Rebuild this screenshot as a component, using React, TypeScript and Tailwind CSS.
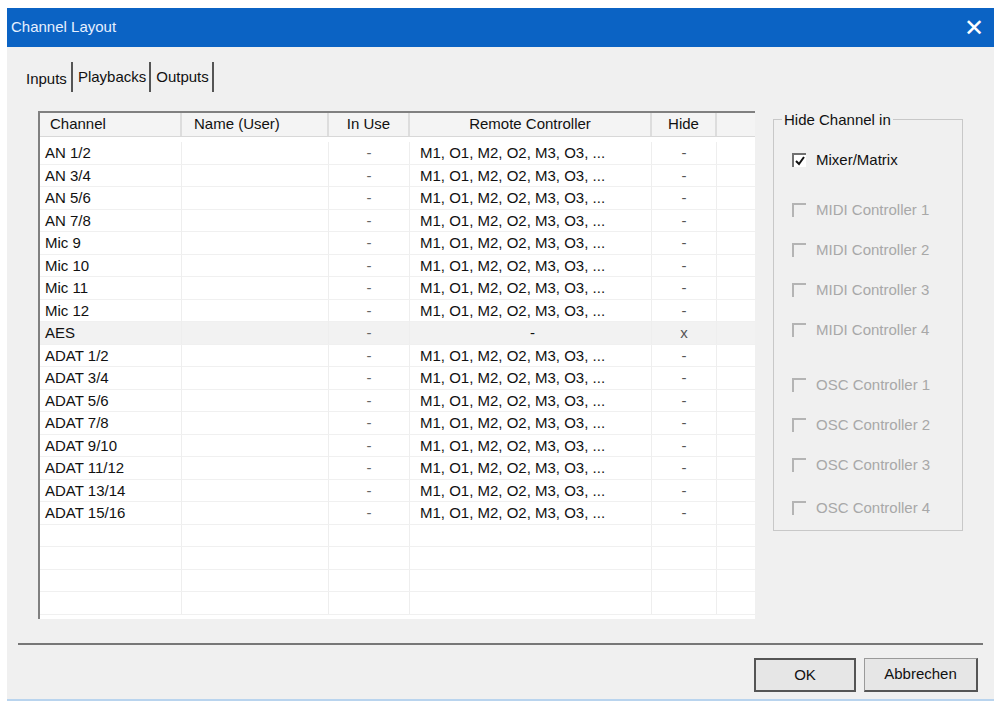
import React from 'react';

const rows: [string, string, string, string?][] = [
  ['AN 1/2', '-', 'M1, O1, M2, O2, M3, O3, ...', '-'],
  ['AN 3/4', '-', 'M1, O1, M2, O2, M3, O3, ...', '-'],
  ['AN 5/6', '-', 'M1, O1, M2, O2, M3, O3, ...', '-'],
  ['AN 7/8', '-', 'M1, O1, M2, O2, M3, O3, ...', '-'],
  ['Mic 9', '-', 'M1, O1, M2, O2, M3, O3, ...', '-'],
  ['Mic 10', '-', 'M1, O1, M2, O2, M3, O3, ...', '-'],
  ['Mic 11', '-', 'M1, O1, M2, O2, M3, O3, ...', '-'],
  ['Mic 12', '-', 'M1, O1, M2, O2, M3, O3, ...', '-'],
  ['AES', '-', '-', 'x'],
  ['ADAT 1/2', '-', 'M1, O1, M2, O2, M3, O3, ...', '-'],
  ['ADAT 3/4', '-', 'M1, O1, M2, O2, M3, O3, ...', '-'],
  ['ADAT 5/6', '-', 'M1, O1, M2, O2, M3, O3, ...', '-'],
  ['ADAT 7/8', '-', 'M1, O1, M2, O2, M3, O3, ...', '-'],
  ['ADAT 9/10', '-', 'M1, O1, M2, O2, M3, O3, ...', '-'],
  ['ADAT 11/12', '-', 'M1, O1, M2, O2, M3, O3, ...', '-'],
  ['ADAT 13/14', '-', 'M1, O1, M2, O2, M3, O3, ...', '-'],
  ['ADAT 15/16', '-', 'M1, O1, M2, O2, M3, O3, ...', '-'],
  ['', '', ''],
  ['', '', ''],
  ['', '', ''],
  ['', '', ''],
];

const cols = 'grid grid-cols-[142px_147px_81px_242px_65px_1fr]';

function Check({ label, checked, disabled, className = '' }: { label: string; checked?: boolean; disabled?: boolean; className?: string }) {
  return (
    <div className={`flex items-center gap-[10px] h-[20px] ${className}`}>
      <div className={`w-[14px] h-[14px] border-t-2 border-l-2 ${disabled ? 'border-[#b4b4b4] bg-[#f0f0f0]' : 'border-[#707070] bg-white'} flex items-center justify-center`}>
        {checked && (
          <svg width="12" height="12" viewBox="0 0 12 12"><path d="M2 6 L5 9 L10 2" stroke="#111" strokeWidth="2" fill="none" /></svg>
        )}
      </div>
      <span className={`text-[15px] ${disabled ? 'text-[#a8a8a8]' : 'text-[#111]'}`}>{label}</span>
    </div>
  );
}

export default function App() {
  return (
    <div className="w-[1004px] h-[704px] bg-white pt-[8px] pl-[7px] pr-[10px] pb-[3px]" style={{ fontFamily: '"Liberation Sans", Arial, sans-serif' }}>
      <div className="h-full flex flex-col bg-[#f0f0f0] border-b-2 border-[#b9d4ee]">
        <div className="h-[39px] bg-[#0b63c4] flex items-center justify-between px-[4px]">
          <span className="text-[#e6f0ff] text-[15px]">Channel Layout</span>
          <span className="text-white text-[24px] leading-none pr-[6px]">✕</span>
        </div>
        <div className="flex-1 flex flex-col px-[11px]">
          <div className="flex items-end h-[48px] pl-[8px] pb-[3px] text-[15px] text-[#111]">
            <span className="pr-[4px] pb-[2px]">Inputs</span>
            <span className="border-l-2 border-[#555] h-[30px] pl-[5px] pr-[3px] flex items-center">Playbacks</span>
            <span className="border-l-2 border-[#555] h-[30px] pl-[5px] pr-[3px] flex items-center border-r-2">Outputs</span>
          </div>
          <div className="h-[550px] border-b-2 border-[#777] flex pt-[16px] pl-[20px]">
            <div className="w-[717px] h-[508px] overflow-hidden border-t-2 border-l-2 border-[#808080] bg-white flex flex-col text-[15px] text-[#111]">
              <div className={`${cols} h-[24px] shrink-0 bg-[#f4f4f4] border-b border-[#d8d8d8]`}>
                <div className="pl-[10px] border-r-2 border-[#ddd] flex items-center">Channel</div>
                <div className="pl-[12px] border-r-2 border-[#ddd] flex items-center">Name (User)</div>
                <div className="border-r-2 border-[#ddd] flex items-center justify-center">In Use</div>
                <div className="border-r-2 border-[#ddd] flex items-center justify-center">Remote Controller</div>
                <div className="border-r-2 border-[#ddd] flex items-center justify-center">Hide</div>
                <div />
              </div>
              <div className="pt-[5px]">
                {rows.map((r, i) => (
                  <div key={i} className={`${cols} h-[22.5px] leading-[22px] border-b border-[#f0f0f0] ${r[0] === 'AES' ? 'bg-[#f2f2f2]' : ''}`}>
                    <div className="pl-[5px] border-r border-[#eee]">{r[0]}</div>
                    <div className="border-r border-[#eee]" />
                    <div className="text-center border-r border-[#eee] text-[#666]">{r[1]}</div>
                    <div className="pl-[10px] border-r border-[#eee]">{r[0] === 'AES' ? <span className="pl-[110px]">-</span> : r[2]}</div>
                    <div className="text-center border-r border-[#eee] text-[#555]">{r[3] ?? ''}</div>
                    <div />
                  </div>
                ))}
              </div>
            </div>
            <div className="ml-[18px] mt-[8px] w-[190px] h-[412px] border border-[#c8c8c8] relative">
              <span className="absolute -top-[11px] left-[8px] bg-[#f0f0f0] px-[2px] text-[15px] text-[#111]">Hide Channel in</span>
              <div className="flex flex-col pl-[18px] pt-[30px]">
                <Check label="Mixer/Matrix" checked />
                <Check label="MIDI Controller 1" disabled className="mt-[30px]" />
                <Check label="MIDI Controller 2" disabled className="mt-[20px]" />
                <Check label="MIDI Controller 3" disabled className="mt-[20px]" />
                <Check label="MIDI Controller 4" disabled className="mt-[20px]" />
                <Check label="OSC Controller 1" disabled className="mt-[35px]" />
                <Check label="OSC Controller 2" disabled className="mt-[20px]" />
                <Check label="OSC Controller 3" disabled className="mt-[20px]" />
                <Check label="OSC Controller 4" disabled className="mt-[23px]" />
              </div>
            </div>
          </div>
          <div className="flex justify-end gap-[8px] pt-[13px] pr-[5px] text-[15px] text-[#111]">
            <div className="w-[102px] h-[34px] bg-[#e6e6e6] border-2 border-[#555] flex items-center justify-center">OK</div>
            <div className="w-[114px] h-[34px] bg-[#e6e6e6] border border-[#9a9a9a] border-b-2 border-r-2 border-b-[#555] border-r-[#555] flex items-center justify-center">Abbrechen</div>
          </div>
        </div>
      </div>
    </div>
  );
}
